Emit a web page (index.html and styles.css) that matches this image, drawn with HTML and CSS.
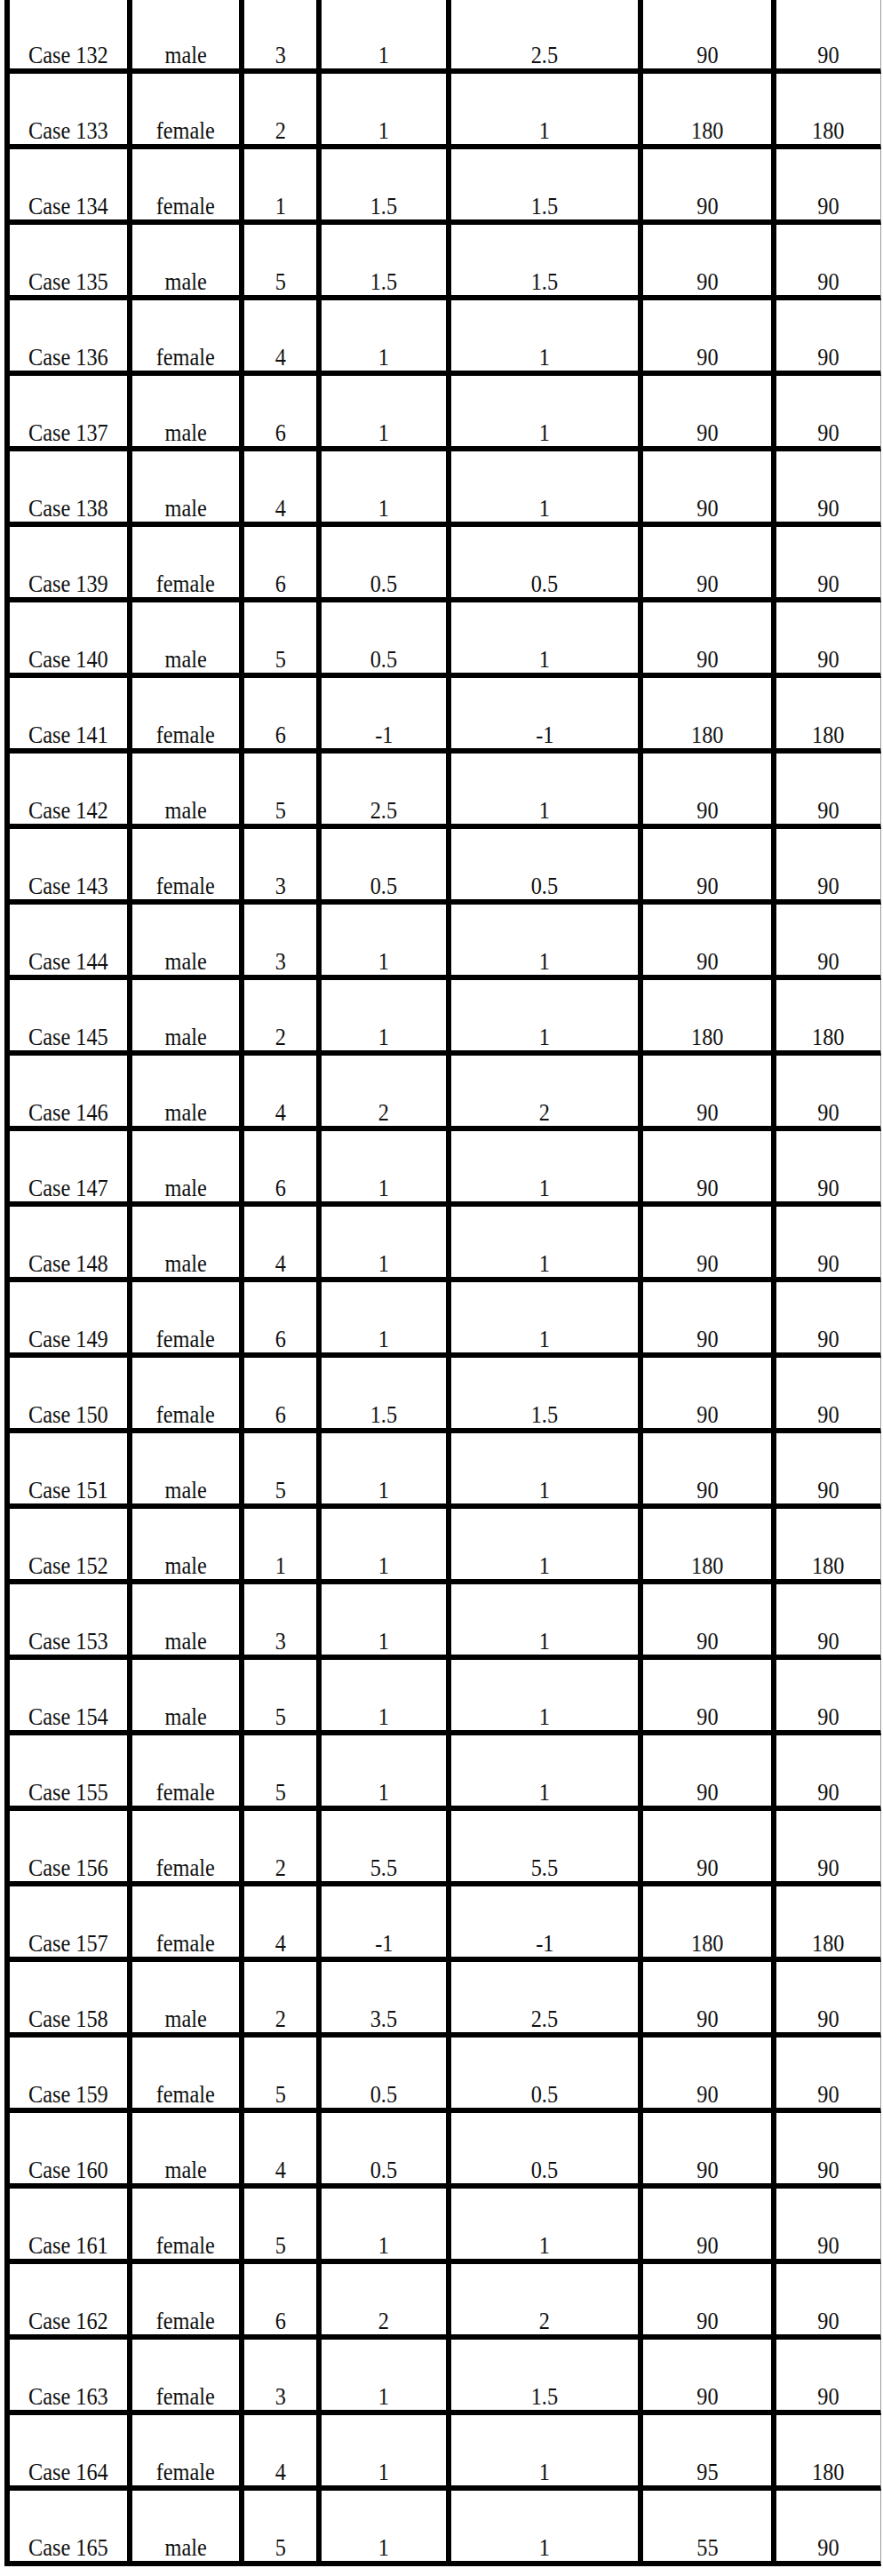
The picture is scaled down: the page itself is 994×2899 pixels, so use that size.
FILE: index.html
```html
<!DOCTYPE html>
<html>
<head>
<meta charset="utf-8">
<link rel="stylesheet" href="styles.css">
</head>
<body>
<table class="cases">
<colgroup>
<col class="c1"><col class="c2"><col class="c3"><col class="c4"><col class="c5"><col class="c6"><col class="c7">
</colgroup>
<tbody>
<tr><td><span>Case 132</span></td><td><span>male</span></td><td><span>3</span></td><td><span>1</span></td><td><span>2.5</span></td><td><span>90</span></td><td><span>90</span></td></tr>
<tr><td><span>Case 133</span></td><td><span>female</span></td><td><span>2</span></td><td><span>1</span></td><td><span>1</span></td><td><span>180</span></td><td><span>180</span></td></tr>
<tr><td><span>Case 134</span></td><td><span>female</span></td><td><span>1</span></td><td><span>1.5</span></td><td><span>1.5</span></td><td><span>90</span></td><td><span>90</span></td></tr>
<tr><td><span>Case 135</span></td><td><span>male</span></td><td><span>5</span></td><td><span>1.5</span></td><td><span>1.5</span></td><td><span>90</span></td><td><span>90</span></td></tr>
<tr><td><span>Case 136</span></td><td><span>female</span></td><td><span>4</span></td><td><span>1</span></td><td><span>1</span></td><td><span>90</span></td><td><span>90</span></td></tr>
<tr><td><span>Case 137</span></td><td><span>male</span></td><td><span>6</span></td><td><span>1</span></td><td><span>1</span></td><td><span>90</span></td><td><span>90</span></td></tr>
<tr><td><span>Case 138</span></td><td><span>male</span></td><td><span>4</span></td><td><span>1</span></td><td><span>1</span></td><td><span>90</span></td><td><span>90</span></td></tr>
<tr><td><span>Case 139</span></td><td><span>female</span></td><td><span>6</span></td><td><span>0.5</span></td><td><span>0.5</span></td><td><span>90</span></td><td><span>90</span></td></tr>
<tr><td><span>Case 140</span></td><td><span>male</span></td><td><span>5</span></td><td><span>0.5</span></td><td><span>1</span></td><td><span>90</span></td><td><span>90</span></td></tr>
<tr><td><span>Case 141</span></td><td><span>female</span></td><td><span>6</span></td><td><span>-1</span></td><td><span>-1</span></td><td><span>180</span></td><td><span>180</span></td></tr>
<tr><td><span>Case 142</span></td><td><span>male</span></td><td><span>5</span></td><td><span>2.5</span></td><td><span>1</span></td><td><span>90</span></td><td><span>90</span></td></tr>
<tr><td><span>Case 143</span></td><td><span>female</span></td><td><span>3</span></td><td><span>0.5</span></td><td><span>0.5</span></td><td><span>90</span></td><td><span>90</span></td></tr>
<tr><td><span>Case 144</span></td><td><span>male</span></td><td><span>3</span></td><td><span>1</span></td><td><span>1</span></td><td><span>90</span></td><td><span>90</span></td></tr>
<tr><td><span>Case 145</span></td><td><span>male</span></td><td><span>2</span></td><td><span>1</span></td><td><span>1</span></td><td><span>180</span></td><td><span>180</span></td></tr>
<tr><td><span>Case 146</span></td><td><span>male</span></td><td><span>4</span></td><td><span>2</span></td><td><span>2</span></td><td><span>90</span></td><td><span>90</span></td></tr>
<tr><td><span>Case 147</span></td><td><span>male</span></td><td><span>6</span></td><td><span>1</span></td><td><span>1</span></td><td><span>90</span></td><td><span>90</span></td></tr>
<tr><td><span>Case 148</span></td><td><span>male</span></td><td><span>4</span></td><td><span>1</span></td><td><span>1</span></td><td><span>90</span></td><td><span>90</span></td></tr>
<tr><td><span>Case 149</span></td><td><span>female</span></td><td><span>6</span></td><td><span>1</span></td><td><span>1</span></td><td><span>90</span></td><td><span>90</span></td></tr>
<tr><td><span>Case 150</span></td><td><span>female</span></td><td><span>6</span></td><td><span>1.5</span></td><td><span>1.5</span></td><td><span>90</span></td><td><span>90</span></td></tr>
<tr><td><span>Case 151</span></td><td><span>male</span></td><td><span>5</span></td><td><span>1</span></td><td><span>1</span></td><td><span>90</span></td><td><span>90</span></td></tr>
<tr><td><span>Case 152</span></td><td><span>male</span></td><td><span>1</span></td><td><span>1</span></td><td><span>1</span></td><td><span>180</span></td><td><span>180</span></td></tr>
<tr><td><span>Case 153</span></td><td><span>male</span></td><td><span>3</span></td><td><span>1</span></td><td><span>1</span></td><td><span>90</span></td><td><span>90</span></td></tr>
<tr><td><span>Case 154</span></td><td><span>male</span></td><td><span>5</span></td><td><span>1</span></td><td><span>1</span></td><td><span>90</span></td><td><span>90</span></td></tr>
<tr><td><span>Case 155</span></td><td><span>female</span></td><td><span>5</span></td><td><span>1</span></td><td><span>1</span></td><td><span>90</span></td><td><span>90</span></td></tr>
<tr><td><span>Case 156</span></td><td><span>female</span></td><td><span>2</span></td><td><span>5.5</span></td><td><span>5.5</span></td><td><span>90</span></td><td><span>90</span></td></tr>
<tr><td><span>Case 157</span></td><td><span>female</span></td><td><span>4</span></td><td><span>-1</span></td><td><span>-1</span></td><td><span>180</span></td><td><span>180</span></td></tr>
<tr><td><span>Case 158</span></td><td><span>male</span></td><td><span>2</span></td><td><span>3.5</span></td><td><span>2.5</span></td><td><span>90</span></td><td><span>90</span></td></tr>
<tr><td><span>Case 159</span></td><td><span>female</span></td><td><span>5</span></td><td><span>0.5</span></td><td><span>0.5</span></td><td><span>90</span></td><td><span>90</span></td></tr>
<tr><td><span>Case 160</span></td><td><span>male</span></td><td><span>4</span></td><td><span>0.5</span></td><td><span>0.5</span></td><td><span>90</span></td><td><span>90</span></td></tr>
<tr><td><span>Case 161</span></td><td><span>female</span></td><td><span>5</span></td><td><span>1</span></td><td><span>1</span></td><td><span>90</span></td><td><span>90</span></td></tr>
<tr><td><span>Case 162</span></td><td><span>female</span></td><td><span>6</span></td><td><span>2</span></td><td><span>2</span></td><td><span>90</span></td><td><span>90</span></td></tr>
<tr><td><span>Case 163</span></td><td><span>female</span></td><td><span>3</span></td><td><span>1</span></td><td><span>1.5</span></td><td><span>90</span></td><td><span>90</span></td></tr>
<tr><td><span>Case 164</span></td><td><span>female</span></td><td><span>4</span></td><td><span>1</span></td><td><span>1</span></td><td><span>95</span></td><td><span>180</span></td></tr>
<tr><td><span>Case 165</span></td><td><span>male</span></td><td><span>5</span></td><td><span>1</span></td><td><span>1</span></td><td><span>55</span></td><td><span>90</span></td></tr>
</tbody>
</table>
</body>
</html>
```

FILE: styles.css
```css
html, body {
  margin: 0;
  padding: 0;
  background: #ffffff;
}

body {
  font-family: "Liberation Serif", "Times New Roman", serif;
  color: #111111;
  overflow: hidden;
}

.cases {
  border-collapse: separate;
  border-spacing: 0;
  table-layout: fixed;
  width: 987px;
  margin: -8px 0 0 5px;
}

.c1 { width: 144px; }
.c2 { width: 126px; }
.c3 { width: 87px; }
.c4 { width: 146px; }
.c5 { width: 216px; }
.c6 { width: 150px; }
.c7 { width: 118px; }

.cases td {
  box-sizing: border-box;
  height: 85px;
  padding: 0;
  border-right: 6px solid #000000;
  border-bottom: 6px solid #000000;
  text-align: center;
  vertical-align: bottom;
  font-size: 27px;
  line-height: 30px;
  white-space: nowrap;
}

.cases td span {
  display: inline-block;
  transform: scaleX(0.9);
  transform-origin: 50% 50%;
}

.cases tr:first-child td {
  height: 91px;
  border-top: 6px solid #000000;
}

.cases td:first-child {
  border-left: 6px solid #000000;
}

.cases td:last-child {
  border-right: 1px solid #9a9a9a;
}
```
